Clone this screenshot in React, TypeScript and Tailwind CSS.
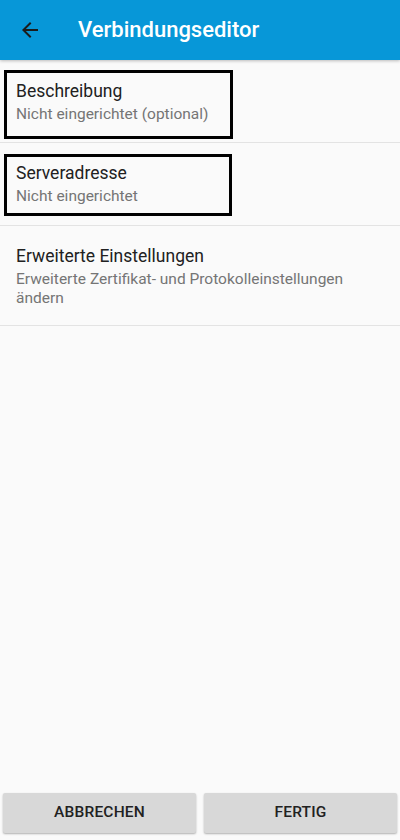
import React from 'react';

const ArrowBack: React.FC = () => (
  <svg width="24" height="24" viewBox="0 0 24 24" className="text-[#1b1b1b]">
    <path d="M20 11H7.83l5.59-5.59L12 4l-8 8 8 8 1.41-1.41L7.83 13H20v-2z" fill="currentColor" />
  </svg>
);

const App: React.FC = () => {
  return (
    <div className="h-[840px] w-[400px] flex flex-col bg-[#fafafa] font-['Roboto',sans-serif]">
      <header className="h-[60px] shrink-0 bg-[#0797d8] flex items-center shadow-[0_1px_3px_rgba(0,0,0,0.25)] relative z-10">
        <div className="w-[78px] pl-[18px] flex items-center">
          <ArrowBack />
        </div>
        <h1 className="text-[22px] font-medium text-white leading-none">Verbindungseditor</h1>
      </header>

      <div className="h-[82px] shrink-0 pt-[10px] pl-[4px]">
        <div className="w-[229px] h-[69px] border-[3px] border-black pl-[9px] pt-[7px]">
          <div className="text-[17.5px] leading-[23px] text-[#212121]">Beschreibung</div>
          <div className="text-[15.5px] leading-[22px] text-[#757575]">Nicht eingerichtet (optional)</div>
        </div>
      </div>
      <div className="h-px shrink-0 bg-[#e3e3e3]" />

      <div className="h-[82px] shrink-0 pt-[11px] pl-[4px]">
        <div className="w-[228px] h-[62px] border-[3px] border-black pl-[9px] pt-[5px]">
          <div className="text-[17.5px] leading-[23px] text-[#212121]">Serveradresse</div>
          <div className="text-[15.5px] leading-[22px] text-[#757575]">Nicht eingerichtet</div>
        </div>
      </div>
      <div className="h-px shrink-0 bg-[#e3e3e3]" />

      <div className="h-[99px] shrink-0 px-4 pt-[19px]">
        <div className="text-[17.5px] leading-[23px] text-[#212121]">Erweiterte Einstellungen</div>
        <div className="text-[15.5px] leading-[19px] text-[#757575] pr-4 mt-[2px]">
          Erweiterte Zertifikat- und Protokolleinstellungen ändern
        </div>
      </div>
      <div className="h-px shrink-0 bg-[#e3e3e3]" />

      <div className="flex-1" />

      <div className="flex gap-[8px] px-[3px] pb-[7px]">
        <button className="flex-1 h-[40px] bg-[#d8d8d8] rounded-[2px] shadow-[0_1px_2px_rgba(0,0,0,0.3)] text-[15.5px] font-medium text-[#212121] tracking-[0.2px]">
          ABBRECHEN
        </button>
        <button className="flex-1 h-[40px] bg-[#d8d8d8] rounded-[2px] shadow-[0_1px_2px_rgba(0,0,0,0.3)] text-[15.5px] font-medium text-[#212121] tracking-[0.2px]">
          FERTIG
        </button>
      </div>
    </div>
  );
};

export default App;
